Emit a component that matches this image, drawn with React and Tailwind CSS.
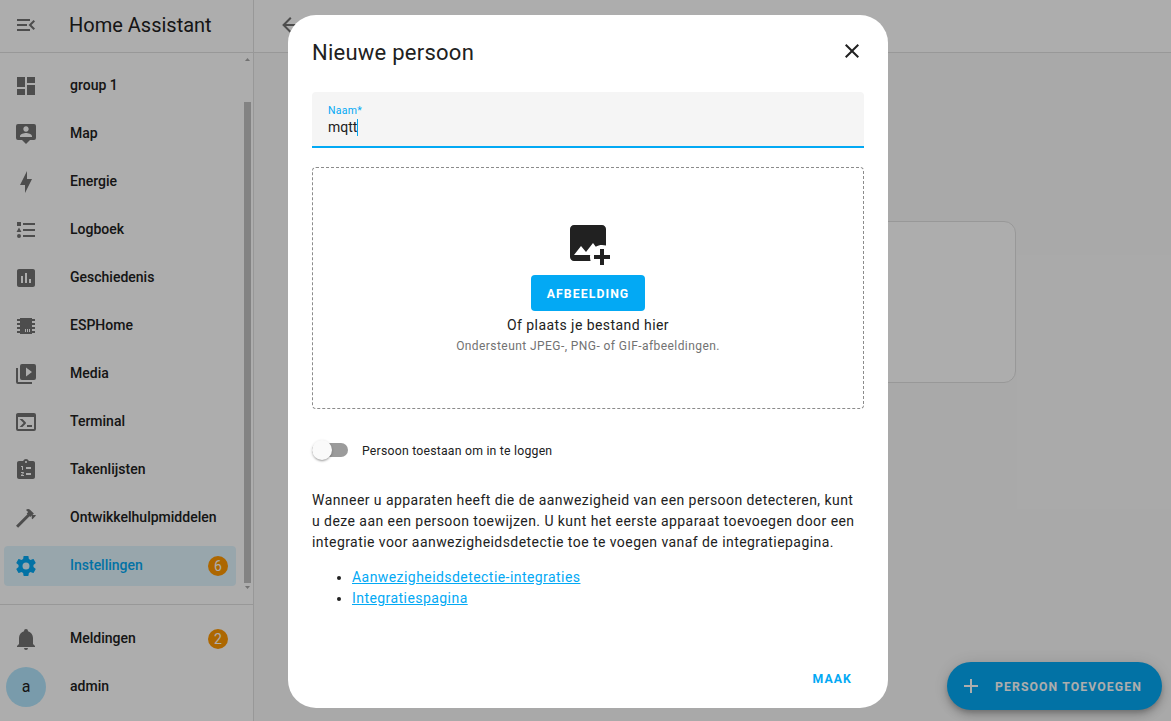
const ICONS = {
  menuOpen:
    "M21,15.61L19.59,17L14.58,12L19.59,7L21,8.39L17.44,12L21,15.61M3,6H16V8H3V6M3,13V11H13V13H3M3,18V16H16V18H3Z",
  dashboard: "M13,3V9H21V3M13,21H21V11H13M3,21H11V15H3M3,13H11V3H3V13Z",
  map: "M20,2H4A2,2 0 0,0 2,4V16A2,2 0 0,0 4,18H8L12,22L16,18H20A2,2 0 0,0 22,16V4A2,2 0 0,0 20,2M12,4.3C13.5,4.3 14.7,5.5 14.7,7C14.7,8.5 13.5,9.7 12,9.7C10.5,9.7 9.3,8.5 9.3,7C9.3,5.5 10.5,4.3 12,4.3M18,15H6V14.1C6,12.1 10,11 12,11C14,11 18,12.1 18,14.1V15Z",
  bolt: "M11 15H6L13 1V9H18L11 23V15Z",
  list: "M5,9.5L7.5,14H2.5L5,9.5M3,4H7V8H3V4M5,20A2,2 0 0,0 7,18A2,2 0 0,0 5,16A2,2 0 0,0 3,18A2,2 0 0,0 5,20M9,5V7H21V5H9M9,19H21V17H9V19M9,13H21V11H9V13Z",
  chart:
    "M9 17H7V10H9V17M13 17H11V7H13V17M17 17H15V13H17V17M19 3H5C3.9 3 3 3.9 3 5V19C3 20.1 3.9 21 5 21H19C20.1 21 21 20.1 21 19V5C21 3.9 20.1 3 19 3Z",
  chip: "M6,4H18V5H21V7H18V9H21V11H18V13H21V15H18V17H21V19H18V20H6V19H3V17H6V15H3V13H6V11H3V9H6V7H3V5H6V4M11,15V18H12V15H11M13,15V18H14V15H13M15,15V18H16V15H15Z",
  media:
    "M4,6H2V20A2,2 0 0,0 4,22H18V20H4V6M20,2H8A2,2 0 0,0 6,4V16A2,2 0 0,0 8,18H20A2,2 0 0,0 22,16V4A2,2 0 0,0 20,2M12,14.5V5.5L18,10L12,14.5Z",
  terminal:
    "M20,19V7H4V19H20M20,3A2,2 0 0,1 22,5V19A2,2 0 0,1 20,21H4A2,2 0 0,1 2,19V5C2,3.89 2.9,3 4,3H20M13,17V15H18V17H13M9.58,13L5.57,9H8.4L11.7,12.3C12.09,12.69 12.09,13.33 11.7,13.72L8.42,17H5.59L9.58,13Z",
  clipboard:
    "M19 3H14.82C14.4 1.84 13.3 1 12 1S9.6 1.84 9.18 3H5C3.9 3 3 3.9 3 5V19C3 20.1 3.9 21 5 21H19C20.1 21 21 20.1 21 19V5C21 3.9 20.1 3 19 3M7 8H9V12H8V9H7V8M10 17V18H7V17.08L9 15H7V14H9.25C9.66 14 10 14.34 10 14.75C10 14.95 9.92 15.14 9.79 15.27L8.12 17H10M11 4C11 3.45 11.45 3 12 3S13 3.45 13 4 12.55 5 12 5 11 4.55 11 4M17 17H12V15H17V17M17 11H12V9H17V11Z",
  hammer:
    "M2,19.63L13.43,8.2L12.72,7.5L14.14,6.07L12,3.89C13.2,2.7 15.09,2.7 16.27,3.89L19.87,7.5L18.45,8.91H21.29L22,9.62L18.45,13.21L17.74,12.5V9.62L16.27,11.04L15.56,10.33L4.13,21.76L2,19.63Z",
  cog: "M12,15.5A3.5,3.5 0 0,1 8.5,12A3.5,3.5 0 0,1 12,8.5A3.5,3.5 0 0,1 15.5,12A3.5,3.5 0 0,1 12,15.5M19.43,12.97C19.47,12.65 19.5,12.33 19.5,12C19.5,11.67 19.47,11.34 19.43,11L21.54,9.37C21.73,9.22 21.78,8.95 21.66,8.73L19.66,5.27C19.54,5.05 19.27,4.96 19.05,5.05L16.56,6.05C16.04,5.66 15.5,5.32 14.87,5.07L14.5,2.42C14.46,2.18 14.25,2 14,2H10C9.75,2 9.54,2.18 9.5,2.42L9.13,5.07C8.5,5.32 7.96,5.66 7.44,6.05L4.95,5.05C4.73,4.96 4.46,5.05 4.34,5.27L2.34,8.73C2.21,8.95 2.27,9.22 2.46,9.37L4.57,11C4.53,11.34 4.5,11.67 4.5,12C4.5,12.33 4.53,12.65 4.57,12.97L2.46,14.63C2.27,14.78 2.21,15.05 2.34,15.27L4.34,18.73C4.46,18.95 4.73,19.03 4.95,18.95L7.44,17.94C7.96,18.34 8.5,18.68 9.13,18.93L9.5,21.58C9.54,21.82 9.75,22 10,22H14C14.25,22 14.46,21.82 14.5,21.58L14.87,18.93C15.5,18.67 16.04,18.34 16.56,17.94L19.05,18.95C19.27,19.03 19.54,18.95 19.66,18.73L21.66,15.27C21.78,15.05 21.73,14.78 21.54,14.63L19.43,12.97Z",
  bell: "M21,19V20H3V19L5,17V11C5,7.9 7.03,5.17 10,4.29C10,4.19 10,4.1 10,4A2,2 0 0,1 12,2A2,2 0 0,1 14,4C14,4.1 14,4.19 14,4.29C16.97,5.17 19,7.9 19,11V17L21,19M14,21A2,2 0 0,1 12,23A2,2 0 0,1 10,21",
  arrowLeft: "M20,11V13H8L13.5,18.5L12.08,19.92L4.16,12L12.08,4.08L13.5,5.5L8,11H20Z",
  close:
    "M19,6.41L17.59,5L12,10.59L6.41,5L5,6.41L10.59,12L5,17.59L6.41,19L12,13.41L17.59,19L19,17.59L13.41,12L19,6.41Z",
  plus: "M19,13H13V19H11V13H5V11H11V5H13V11H19V13Z",
  imagePlus:
    "M18 15V18H15V20H18V23H20V20H23V18H20V15H18M13.3 21H5C3.9 21 3 20.1 3 19V5C3 3.9 3.9 3 5 3H19C20.1 3 21 3.9 21 5V13.3C20.4 13.1 19.7 13 19 13C17.9 13 16.8 13.3 15.9 13.9L14.5 12L11 16.5L8.5 13.5L5 18H13.1C13 18.3 13 18.7 13 19C13 19.7 13.1 20.4 13.3 21Z",
};

function Icon({ name, className = "size-6" }) {
  return (
    <svg viewBox="0 0 24 24" className={`shrink-0 fill-current ${className}`}>
      <path fillRule="evenodd" d={ICONS[name]} />
    </svg>
  );
}

const NAV = [
  { icon: "dashboard", label: "group 1" },
  { icon: "map", label: "Map" },
  { icon: "bolt", label: "Energie" },
  { icon: "list", label: "Logboek" },
  { icon: "chart", label: "Geschiedenis" },
  { icon: "chip", label: "ESPHome" },
  { icon: "media", label: "Media" },
  { icon: "terminal", label: "Terminal" },
  { icon: "clipboard", label: "Takenlijsten" },
  { icon: "hammer", label: "Ontwikkelhulpmiddelen" },
  { icon: "cog", label: "Instellingen", badge: "6", active: true },
];

function Badge({ children }) {
  return (
    <span className="flex size-5 items-center justify-center rounded-full bg-[#ff9800] text-sm font-normal text-white">
      <span className="-mt-px">{children}</span>
    </span>
  );
}

function NavItem({ icon, label, badge, active }) {
  return (
    <div
      className={`flex h-10 w-[232px] items-center rounded pl-[10px] pr-2 ${
        active ? "bg-[#03a9f4]/12 text-[#03a9f4]" : "text-[#212121]"
      }`}
    >
      <Icon name={icon} className={active ? "size-6" : "size-6 text-[#727272]"} />
      <span className="ml-8 flex-1 whitespace-nowrap pb-0.5 text-sm font-medium">{label}</span>
      {badge && <Badge>{badge}</Badge>}
    </div>
  );
}

function Sidebar() {
  return (
    <aside className="flex w-[254px] shrink-0 flex-col border-r border-[#e0e0e0] bg-white">
      <header className="flex h-[53px] items-center border-b border-[#e0e0e0] pb-0.5 pl-[14px]">
        <Icon name="menuOpen" className="size-6 text-[#727272]" />
        <h1 className="ml-[31px] text-xl text-[#212121]">Home Assistant</h1>
      </header>
      <div className="flex h-[551px]">
        <nav className="flex w-[240px] flex-col gap-2 pl-1 pt-[13px]">
          {NAV.map((item) => (
            <NavItem key={item.label} {...item} />
          ))}
        </nav>
        <div className="ml-1 flex w-[7px] flex-col items-center pt-[5px]">
          <svg viewBox="0 0 5 3" className="h-[3px] w-[5px] fill-[#a8a8a8]">
            <path d="M2.5 0L5 3H0Z" />
          </svg>
          <div className="mt-[41px] h-[481px] w-[7px] bg-[#c1c1c1]" />
          <svg viewBox="0 0 5 3" className="mt-[3px] h-[3px] w-[5px] fill-[#a8a8a8]">
            <path d="M0 0H5L2.5 3Z" />
          </svg>
        </div>
      </div>
      <div className="flex flex-1 flex-col gap-2 border-t border-[#e0e0e0] pl-1 pt-[14px]">
        <NavItem icon="bell" label="Meldingen" badge="2" />
        <div className="flex h-10 items-center pl-0.5 text-sm font-medium text-[#212121]">
          <span className="flex size-10 items-center justify-center rounded-full bg-[#b3e5fc] text-base font-normal">
            a
          </span>
          <span className="ml-6 pb-0.5">admin</span>
        </div>
      </div>
    </aside>
  );
}

function Page() {
  return (
    <main className="flex flex-1 flex-col bg-[#fafafa]">
      <header className="flex h-[53px] items-center border-b border-[#e0e0e0] bg-white pb-0.5 pl-6 text-[#727272]">
        <Icon name="arrowLeft" />
      </header>
      <div className="mx-auto mt-[168px] h-[162px] w-[607px] rounded-xl border border-[#e0e0e0] bg-white" />
      <button className="mb-[11px] ml-auto mr-[9px] mt-auto flex h-12 w-[215px] items-center rounded-full bg-[#03a9f4] pl-3 text-white shadow-[0_3px_5px_-1px_rgba(0,0,0,0.2),0_6px_10px_0_rgba(0,0,0,0.14),0_1px_18px_0_rgba(0,0,0,0.12)]">
        <Icon name="plus" />
        <span className="ml-3 whitespace-nowrap pt-0.5 text-[12.25px] font-bold tracking-[1.09px]">
          PERSOON TOEVOEGEN
        </span>
      </button>
    </main>
  );
}

function Dialog() {
  return (
    <section className="flex h-[693px] w-[600px] flex-col rounded-[28px] bg-white px-6 text-[#212121]">
      <header className="flex h-[77px] items-center justify-between pb-[5px]">
        <h2 className="pt-1 text-[22px] leading-7 tracking-[0.25px]">Nieuwe persoon</h2>
        <Icon name="close" />
      </header>

      <div className="flex h-14 flex-col rounded-t border-b-2 border-[#03a9f4] bg-[#f5f5f5] px-4 pt-3">
        <label className="text-[10.5px] leading-[13px] tracking-[0.3px] text-[#03a9f4]">Naam*</label>
        <div className="flex items-center text-sm leading-5">
          <span>mqtt</span>
          <span className="h-[17px] w-px bg-[#03a9f4]" />
        </div>
      </div>

      <div className="mt-[19px] flex h-[242px] flex-col items-center rounded border border-dashed border-[#8c8c8c] pt-[51px]">
        <Icon name="imagePlus" className="size-12" />
        <button className="mt-2 h-9 w-[114px] rounded bg-[#03a9f4] pt-0.5 text-[12.25px] font-bold tracking-[1.09px] text-white">
          AFBEELDING
        </button>
        <span className="mt-1 text-sm leading-5 tracking-[0.44px]">Of plaats je bestand hier</span>
        <span className="mt-px text-xs leading-5 tracking-[0.43px] text-[#727272]">
          Ondersteunt JPEG-, PNG- of GIF-afbeeldingen.
        </span>
      </div>

      <div className="mt-[31px] flex h-5 items-center">
        <span className="flex h-[14px] w-9 items-center rounded-full bg-[#9b9b9b]">
          <span className="size-5 rounded-full bg-[#fafafa] shadow-[0_2px_2px_-1px_rgba(0,0,0,0.25),0_1px_3px_0_rgba(0,0,0,0.2)]" />
        </span>
        <span className="ml-[14px] pt-0.5 text-[12.25px] tracking-[0.22px]">Persoon toestaan om in te loggen</span>
      </div>

      <p className="mt-[30px] whitespace-nowrap text-sm leading-[21px] tracking-[0.44px]">
        Wanneer u apparaten heeft die de aanwezigheid van een persoon detecteren, kunt
        <br />u deze aan een persoon toewijzen. U kunt het eerste apparaat toevoegen door een
        <br />
        integratie voor aanwezigheidsdetectie toe te voegen vanaf de integratiepagina.
      </p>
      <ul className="mt-[14px] list-disc pl-10 text-sm leading-[21px] tracking-[0.44px]">
        <li>
          <a className="text-[#03a9f4] underline">Aanwezigheidsdetectie-integraties</a>
        </li>
        <li>
          <a className="text-[#03a9f4] underline">Integratiespagina</a>
        </li>
      </ul>

      <footer className="mb-5 mt-auto flex justify-end pr-3">
        <button className="text-[12.25px] font-bold leading-[18px] tracking-[1.09px] text-[#03a9f4]">MAAK</button>
      </footer>
    </section>
  );
}

export default function App() {
  return (
    <div className="relative flex h-[721px] w-[1171px] overflow-hidden font-[Roboto,sans-serif]">
      <Sidebar />
      <Page />
      <div className="absolute inset-0 flex items-start justify-center bg-black/32 pl-[5px] pt-[15px]">
        <Dialog />
      </div>
    </div>
  );
}
